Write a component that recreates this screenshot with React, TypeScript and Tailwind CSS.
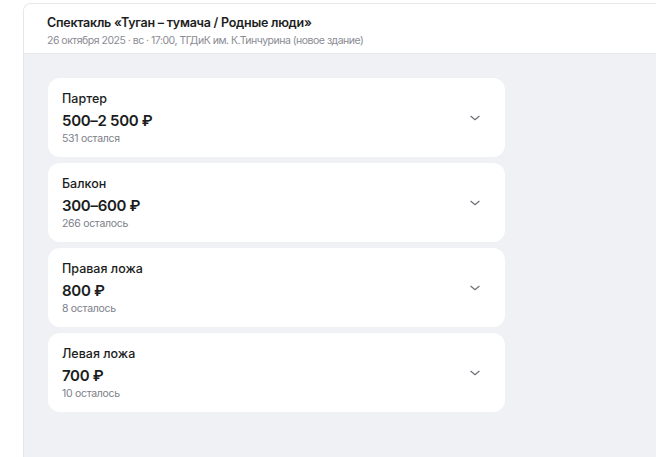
const zones = [
  { name: 'Партер', price: '500–2 500 ₽', left: '531 остался' },
  { name: 'Балкон', price: '300–600 ₽', left: '266 осталось' },
  { name: 'Правая ложа', price: '800 ₽', left: '8 осталось' },
  { name: 'Левая ложа', price: '700 ₽', left: '10 осталось' },
]

function Chevron() {
  return (
    <svg width="14" height="14" viewBox="0 0 24 24" fill="none" stroke="#6b6e76" strokeWidth="2" strokeLinecap="round" strokeLinejoin="round" aria-hidden="true">
      <path d="M5 9l7 6 7-6" />
    </svg>
  )
}

export default function App() {
  return (
    <div className="h-[457px] w-[656px] overflow-hidden bg-white pl-[23px] pt-[3px] font-['Inter',sans-serif]">
      <div className="flex h-full flex-col overflow-hidden rounded-tl-[8px] border-l border-t border-[#e6e7eb]">
        <div className="h-[50px] shrink-0 border-b border-[#e8e9ed] bg-white pl-[23px] pt-[10px]">
          <h1 className="text-[12.5px] font-semibold leading-[18px] tracking-[-0.25px] text-[#1c1d21]">Спектакль «Туган – тумача / Родные люди»</h1>
          <p className="mt-[1px] text-[10.5px] leading-[15px] tracking-[-0.5px] text-[#8a8c93]">26 октября 2025 · вс · 17:00, ТГДиК им. К.Тинчурина (новое здание)</p>
        </div>
        <div className="flex-1 bg-[#f0f1f5] pl-[24px] pt-[24px]">
          <div className="flex w-[457px] flex-col gap-[6px]">
            {zones.map((z) => (
              <div key={z.name} className="flex h-[79px] items-center justify-between rounded-[12px] bg-white pl-[14px] pr-[23px]">
                <div className="flex flex-col pt-[1px]">
                  <span className="text-[12.5px] font-medium leading-[17px] text-[#1c1d21]">{z.name}</span>
                  <span className="mt-[4px] text-[15px] font-semibold leading-[20px] tracking-[-0.3px] text-[#1c1d21]">{z.price}</span>
                  <span className="mt-[1px] text-[10.5px] leading-[14px] tracking-[-0.3px] text-[#7d8088]">{z.left}</span>
                </div>
                <Chevron />
              </div>
            ))}
          </div>
        </div>
      </div>
    </div>
  )
}
